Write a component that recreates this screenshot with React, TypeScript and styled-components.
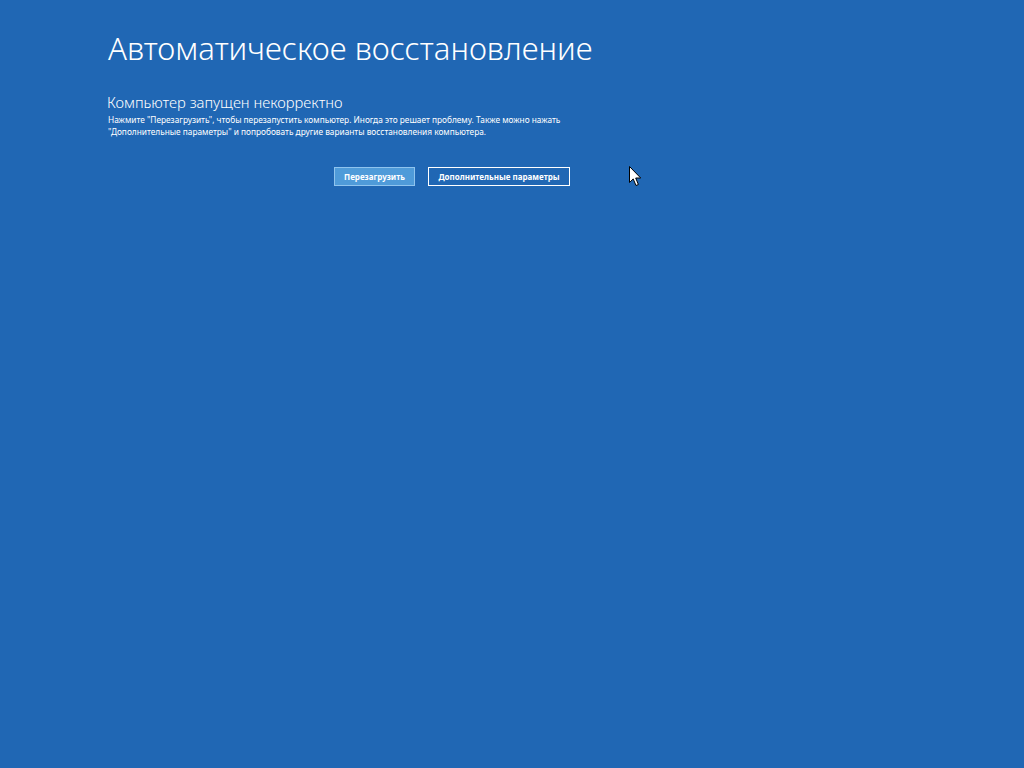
import React from 'react'
import styled, {createGlobalStyle} from 'styled-components'

const GlobalStyle = createGlobalStyle`
  html, body {
    margin: 0;
    padding: 0;
    background: #2067b4;
  }
  body {
    font-family: 'Noto Sans', 'Open Sans', sans-serif;
    color: #ffffff;
  }
`

export default function App(): JSX.Element {
  return (
    <Screen>
      <GlobalStyle />
      <Column>
        <Title>Автоматическое восстановление</Title>
        <Subtitle>Компьютер запущен некорректно</Subtitle>
        <Body>
          Нажмите "Перезагрузить", чтобы перезапустить компьютер. Иногда это решает проблему. Также можно нажать
          <br />
          "Дополнительные параметры" и попробовать другие варианты восстановления компьютера.
        </Body>
        <Actions>
          <Button $primary type='button'>Перезагрузить</Button>
          <Button type='button'>Дополнительные параметры</Button>
        </Actions>
      </Column>
      <Cursor width='14' height='22' viewBox='0 0 14 22'>
        <path
          d='M0.5 0.5 L0.5 16.5 L4.2 12.9 L7 19.5 L9.4 18.5 L6.7 12 L11.7 12 Z'
          fill='#ffffff'
          stroke='#000000'
          strokeWidth='1'
        />
      </Cursor>
    </Screen>
  )
}

const Screen = styled.div`
  position: relative;
  width: 1024px;
  height: 768px;
  overflow: hidden;
  background: #2067b4;
`

const Column = styled.main`
  display: flex;
  flex-direction: column;
  width: 462px;
  padding: 27px 0 0 108px;
`

const Title = styled.h1`
  margin: 0;
  font-size: 31.2px;
  font-weight: 300;
  line-height: 42px;
  white-space: nowrap;
`

const Subtitle = styled.h2`
  margin: 24px 0 0 -1px;
  font-size: 14.8px;
  font-weight: 300;
  line-height: 18px;
  white-space: nowrap;
`

const Body = styled.p`
  margin: 3px 0 0;
  font-size: 8.3px;
  line-height: 12px;
  white-space: nowrap;
`

const Actions = styled.div`
  display: flex;
  justify-content: flex-end;
  gap: 13px;
  margin-top: 29px;
`

const Button = styled.button<{$primary?: boolean}>`
  height: 19px;
  padding: 0 9px;
  border: 1px solid ${p => (p.$primary ? '#8fc4ee' : '#ffffff')};
  background: ${p => (p.$primary ? '#4f9bd9' : 'transparent')};
  color: #ffffff;
  font-family: 'Noto Sans', sans-serif;
  font-size: 8px;
  font-weight: 700;
  min-width: ${p => (p.$primary ? '80px' : '142px')};
`

const Cursor = styled.svg`
  position: absolute;
  left: 629px;
  top: 166px;
`
